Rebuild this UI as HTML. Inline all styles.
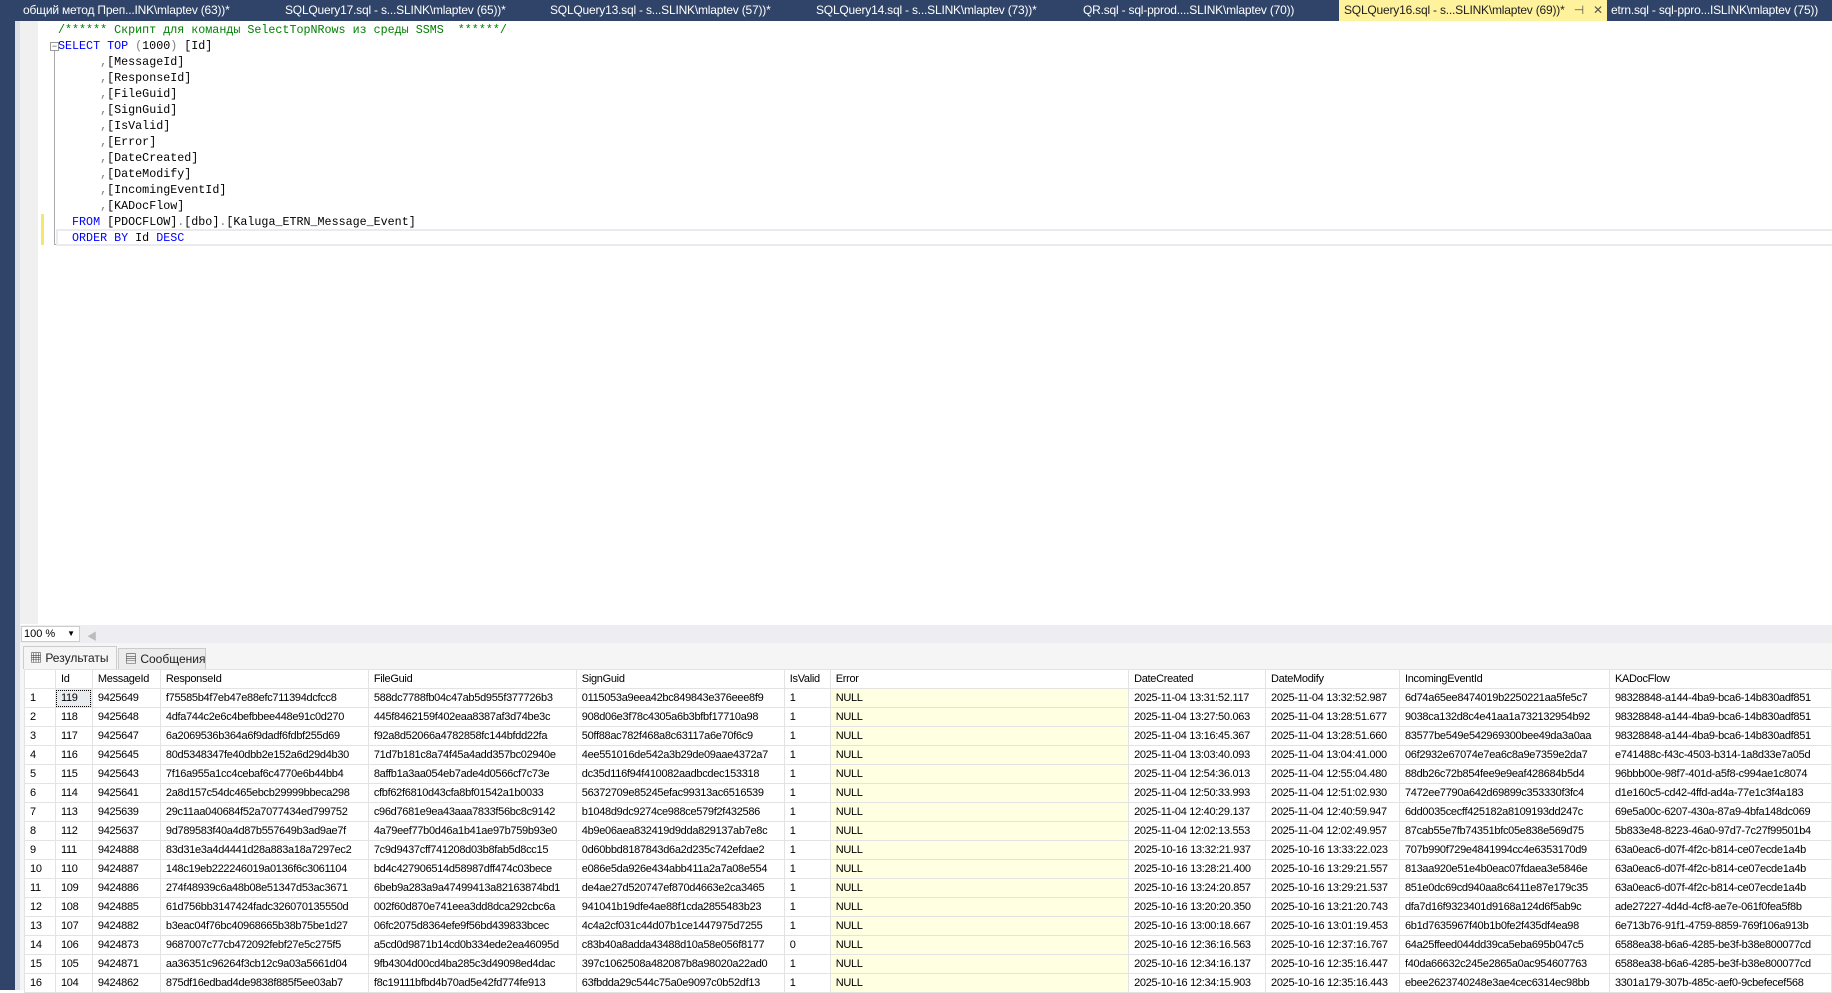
<!DOCTYPE html>
<html><head><meta charset="utf-8"><style>
*{margin:0;padding:0;box-sizing:border-box}
body{width:1832px;height:990px;overflow:hidden;background:#fff;position:relative;font-family:"Liberation Sans","Noto Sans CJK SC",sans-serif}
.abs{position:absolute}
#tabs{left:0;top:0;width:1832px;height:21px;background:#2f4468}
.tab{position:absolute;top:0;height:21px;line-height:21px;font-size:12px;color:#fff;white-space:nowrap;letter-spacing:-0.2px}
.tab.act{background:#fff29d;color:#1e1e1e;padding-left:5px}
#lstrip{left:0;top:21px;width:15px;height:969px;background:#2f4468}
#lgray{left:15px;top:21px;width:5px;height:969px;background:#dcdfe8}
#gut{left:20px;top:21px;width:18px;height:603px;background:#f0f0f0}
.code{position:absolute;left:0;font-family:"Liberation Mono",monospace;font-size:11.7px;white-space:pre;color:#000;line-height:16px}
.kw{color:#0000ff}.cm{color:#008000}.gr{color:#808080}
#zoombar{left:20px;top:625px;width:1812px;height:18px;background:#eeeef2}
#combo{left:21px;top:626px;width:59px;height:16px;background:#fff;border:1px solid #ccc;font-size:11px;line-height:14px;padding-left:2px}
#resarea{left:20px;top:643px;width:1812px;height:347px;background:#f5f5f5}
.rtab{position:absolute;top:646px;height:23px;font-size:12px;line-height:22px;border:1px solid #ccc;border-bottom:none;padding-left:6px;color:#1e1e1e;white-space:nowrap;overflow:hidden}
table{position:absolute;left:24px;top:669px;border-collapse:collapse;table-layout:fixed;background:#fff;font-size:11px;letter-spacing:-0.3px}
td{height:19px;border:1px solid #e3e3e3;padding:0 0 0 5px;white-space:nowrap;overflow:hidden;line-height:18px;color:#000}
td.e{background:#ffffe1}
</style></head><body>
<div id="tabs" class="abs">
<div class="tab" style="left:23px">общий метод Преп...INK\mlaptev (63))*</div>
<div class="tab" style="left:285px">SQLQuery17.sql - s...SLINK\mlaptev (65))*</div>
<div class="tab" style="left:550px">SQLQuery13.sql - s...SLINK\mlaptev (57))*</div>
<div class="tab" style="left:816px">SQLQuery14.sql - s...SLINK\mlaptev (73))*</div>
<div class="tab" style="left:1083px">QR.sql - sql-pprod....SLINK\mlaptev (70))</div>
<div class="tab act" style="left:1339px;width:268px">SQLQuery16.sql - s...SLINK\mlaptev (69))* <span style="color:#555;margin-left:6px">⊣</span><span style="color:#555;margin-left:9px">✕</span></div>
<div class="tab" style="left:1611px">etrn.sql - sql-ppro...ISLINK\mlaptev (75))</div>
</div>
<div id="lstrip" class="abs"></div>
<div id="lgray" class="abs"></div>
<div id="gut" class="abs"></div>
<div class="abs" style="left:41px;top:214px;width:3px;height:31px;background:#f5e66c"></div>
<div class="abs" style="left:50px;top:42px;width:9px;height:9px;border:1px solid #999;font-size:9px;line-height:6px;text-align:center;color:#555">−</div>
<div class="abs" style="left:54px;top:51px;width:1px;height:194px;background:#aaa"></div>
<div class="abs" style="left:54px;top:244px;width:5px;height:1px;background:#aaa"></div>
<div class="abs" style="left:56px;top:229px;width:1776px;height:17px;border:2px solid #eaeaf0;border-right:none"></div>
<div class="abs" style="left:58px;top:22px">
<div class="code" style="top:0"><span class="cm">/****** Скрипт для команды SelectTopNRows из среды SSMS  ******/</span></div>
<div class="code" style="top:16px"><span class="kw">SELECT TOP</span> <span class="gr">(</span>1000<span class="gr">)</span> [Id]</div>
<div class="code" style="top:32px">      <span class="gr">,</span>[MessageId]</div>
<div class="code" style="top:48px">      <span class="gr">,</span>[ResponseId]</div>
<div class="code" style="top:64px">      <span class="gr">,</span>[FileGuid]</div>
<div class="code" style="top:80px">      <span class="gr">,</span>[SignGuid]</div>
<div class="code" style="top:96px">      <span class="gr">,</span>[IsValid]</div>
<div class="code" style="top:112px">      <span class="gr">,</span>[Error]</div>
<div class="code" style="top:128px">      <span class="gr">,</span>[DateCreated]</div>
<div class="code" style="top:144px">      <span class="gr">,</span>[DateModify]</div>
<div class="code" style="top:160px">      <span class="gr">,</span>[IncomingEventId]</div>
<div class="code" style="top:176px">      <span class="gr">,</span>[KADocFlow]</div>
<div class="code" style="top:192px">  <span class="kw">FROM</span> [PDOCFLOW]<span class="gr">.</span>[dbo]<span class="gr">.</span>[Kaluga_ETRN_Message_Event]</div>
<div class="code" style="top:208px">  <span class="kw">ORDER BY</span> Id <span class="kw">DESC</span></div>
</div>
<div id="zoombar" class="abs"><div class="abs" style="left:67px;top:3px;color:#bbb;font-size:10px">◀</div></div>
<div id="combo" class="abs">100 %<span style="position:absolute;right:4px;top:0;font-size:8px">▼</span></div>
<div id="resarea" class="abs"></div>
<div class="rtab" style="left:23px;width:94px;background:#f5f5f5">▦ Результаты</div>
<div class="rtab" style="left:118px;width:88px;top:648px;height:21px;background:#ececec;line-height:20px">▤ Сообщения</div>
<table>
<colgroup><col style="width:31px"><col style="width:37px"><col style="width:68px"><col style="width:208px"><col style="width:208px"><col style="width:208px"><col style="width:46px"><col style="width:299px"><col style="width:137px"><col style="width:134px"><col style="width:210px"><col style="width:222px"></colgroup>
<tr><td></td><td>Id</td><td>MessageId</td><td>ResponseId</td><td>FileGuid</td><td>SignGuid</td><td>IsValid</td><td>Error</td><td>DateCreated</td><td>DateModify</td><td>IncomingEventId</td><td>KADocFlow</td></tr>
<tr><td>1</td><td style="background:#e8ecf0;outline:1px dotted #000;outline-offset:-2px">119</td><td>9425649</td><td>f75585b4f7eb47e88efc711394dcfcc8</td><td>588dc7788fb04c47ab5d955f377726b3</td><td>0115053a9eea42bc849843e376eee8f9</td><td>1</td><td class="e">NULL</td><td>2025-11-04 13:31:52.117</td><td>2025-11-04 13:32:52.987</td><td>6d74a65ee8474019b2250221aa5fe5c7</td><td>98328848-a144-4ba9-bca6-14b830adf851</td></tr>
<tr><td>2</td><td>118</td><td>9425648</td><td>4dfa744c2e6c4befbbee448e91c0d270</td><td>445f8462159f402eaa8387af3d74be3c</td><td>908d06e3f78c4305a6b3bfbf17710a98</td><td>1</td><td class="e">NULL</td><td>2025-11-04 13:27:50.063</td><td>2025-11-04 13:28:51.677</td><td>9038ca132d8c4e41aa1a732132954b92</td><td>98328848-a144-4ba9-bca6-14b830adf851</td></tr>
<tr><td>3</td><td>117</td><td>9425647</td><td>6a2069536b364a6f9dadf6fdbf255d69</td><td>f92a8d52066a4782858fc144bfdd22fa</td><td>50ff88ac782f468a8c63117a6e70f6c9</td><td>1</td><td class="e">NULL</td><td>2025-11-04 13:16:45.367</td><td>2025-11-04 13:28:51.660</td><td>83577be549e542969300bee49da3a0aa</td><td>98328848-a144-4ba9-bca6-14b830adf851</td></tr>
<tr><td>4</td><td>116</td><td>9425645</td><td>80d5348347fe40dbb2e152a6d29d4b30</td><td>71d7b181c8a74f45a4add357bc02940e</td><td>4ee551016de542a3b29de09aae4372a7</td><td>1</td><td class="e">NULL</td><td>2025-11-04 13:03:40.093</td><td>2025-11-04 13:04:41.000</td><td>06f2932e67074e7ea6c8a9e7359e2da7</td><td>e741488c-f43c-4503-b314-1a8d33e7a05d</td></tr>
<tr><td>5</td><td>115</td><td>9425643</td><td>7f16a955a1cc4cebaf6c4770e6b44bb4</td><td>8affb1a3aa054eb7ade4d0566cf7c73e</td><td>dc35d116f94f410082aadbcdec153318</td><td>1</td><td class="e">NULL</td><td>2025-11-04 12:54:36.013</td><td>2025-11-04 12:55:04.480</td><td>88db26c72b854fee9e9eaf428684b5d4</td><td>96bbb00e-98f7-401d-a5f8-c994ae1c8074</td></tr>
<tr><td>6</td><td>114</td><td>9425641</td><td>2a8d157c54dc465ebcb29999bbeca298</td><td>cfbf62f6810d43cfa8bf01542a1b0033</td><td>56372709e85245efac99313ac6516539</td><td>1</td><td class="e">NULL</td><td>2025-11-04 12:50:33.993</td><td>2025-11-04 12:51:02.930</td><td>7472ee7790a642d69899c353330f3fc4</td><td>d1e160c5-cd42-4ffd-ad4a-77e1c3f4a183</td></tr>
<tr><td>7</td><td>113</td><td>9425639</td><td>29c11aa040684f52a7077434ed799752</td><td>c96d7681e9ea43aaa7833f56bc8c9142</td><td>b1048d9dc9274ce988ce579f2f432586</td><td>1</td><td class="e">NULL</td><td>2025-11-04 12:40:29.137</td><td>2025-11-04 12:40:59.947</td><td>6dd0035cecff425182a8109193dd247c</td><td>69e5a00c-6207-430a-87a9-4bfa148dc069</td></tr>
<tr><td>8</td><td>112</td><td>9425637</td><td>9d789583f40a4d87b557649b3ad9ae7f</td><td>4a79eef77b0d46a1b41ae97b759b93e0</td><td>4b9e06aea832419d9dda829137ab7e8c</td><td>1</td><td class="e">NULL</td><td>2025-11-04 12:02:13.553</td><td>2025-11-04 12:02:49.957</td><td>87cab55e7fb74351bfc05e838e569d75</td><td>5b833e48-8223-46a0-97d7-7c27f99501b4</td></tr>
<tr><td>9</td><td>111</td><td>9424888</td><td>83d31e3a4d4441d28a883a18a7297ec2</td><td>7c9d9437cff741208d03b8fab5d8cc15</td><td>0d60bbd8187843d6a2d235c742efdae2</td><td>1</td><td class="e">NULL</td><td>2025-10-16 13:32:21.937</td><td>2025-10-16 13:33:22.023</td><td>707b990f729e4841994cc4e6353170d9</td><td>63a0eac6-d07f-4f2c-b814-ce07ecde1a4b</td></tr>
<tr><td>10</td><td>110</td><td>9424887</td><td>148c19eb222246019a0136f6c3061104</td><td>bd4c427906514d58987dff474c03bece</td><td>e086e5da926e434abb411a2a7a08e554</td><td>1</td><td class="e">NULL</td><td>2025-10-16 13:28:21.400</td><td>2025-10-16 13:29:21.557</td><td>813aa920e51e4b0eac07fdaea3e5846e</td><td>63a0eac6-d07f-4f2c-b814-ce07ecde1a4b</td></tr>
<tr><td>11</td><td>109</td><td>9424886</td><td>274f48939c6a48b08e51347d53ac3671</td><td>6beb9a283a9a47499413a82163874bd1</td><td>de4ae27d520747ef870d4663e2ca3465</td><td>1</td><td class="e">NULL</td><td>2025-10-16 13:24:20.857</td><td>2025-10-16 13:29:21.537</td><td>851e0dc69cd940aa8c6411e87e179c35</td><td>63a0eac6-d07f-4f2c-b814-ce07ecde1a4b</td></tr>
<tr><td>12</td><td>108</td><td>9424885</td><td>61d756bb3147424fadc326070135550d</td><td>002f60d870e741eea3dd8dca292cbc6a</td><td>941041b19dfe4ae88f1cda2855483b23</td><td>1</td><td class="e">NULL</td><td>2025-10-16 13:20:20.350</td><td>2025-10-16 13:21:20.743</td><td>dfa7d16f9323401d9168a124d6f5ab9c</td><td>ade27227-4d4d-4cf8-ae7e-061f0fea5f8b</td></tr>
<tr><td>13</td><td>107</td><td>9424882</td><td>b3eac04f76bc40968665b38b75be1d27</td><td>06fc2075d8364efe9f56bd439833bcec</td><td>4c4a2cf031c44d07b1ce1447975d7255</td><td>1</td><td class="e">NULL</td><td>2025-10-16 13:00:18.667</td><td>2025-10-16 13:01:19.453</td><td>6b1d7635967f40b1b0fe2f435df4ea98</td><td>6e713b76-91f1-4759-8859-769f106a913b</td></tr>
<tr><td>14</td><td>106</td><td>9424873</td><td>9687007c77cb472092febf27e5c275f5</td><td>a5cd0d9871b14cd0b334ede2ea46095d</td><td>c83b40a8adda43488d10a58e056f8177</td><td>0</td><td class="e">NULL</td><td>2025-10-16 12:36:16.563</td><td>2025-10-16 12:37:16.767</td><td>64a25ffeed044dd39ca5eba695b047c5</td><td>6588ea38-b6a6-4285-be3f-b38e800077cd</td></tr>
<tr><td>15</td><td>105</td><td>9424871</td><td>aa36351c96264f3cb12c9a03a5661d04</td><td>9fb4304d00cd4ba285c3d49098ed4dac</td><td>397c1062508a482087b8a98020a22ad0</td><td>1</td><td class="e">NULL</td><td>2025-10-16 12:34:16.137</td><td>2025-10-16 12:35:16.447</td><td>f40da66632c245e2865a0ac954607763</td><td>6588ea38-b6a6-4285-be3f-b38e800077cd</td></tr>
<tr><td>16</td><td>104</td><td>9424862</td><td>875df16edbad4de9838f885f5ee03ab7</td><td>f8c19111bfbd4b70ad5e42fd774fe913</td><td>63fbdda29c544c75a0e9097c0b52df13</td><td>1</td><td class="e">NULL</td><td>2025-10-16 12:34:15.903</td><td>2025-10-16 12:35:16.443</td><td>ebee2623740248e3ae4cec6314ec98bb</td><td>3301a179-307b-485c-aef0-9cbefecef568</td></tr>
</table>
</body></html>
